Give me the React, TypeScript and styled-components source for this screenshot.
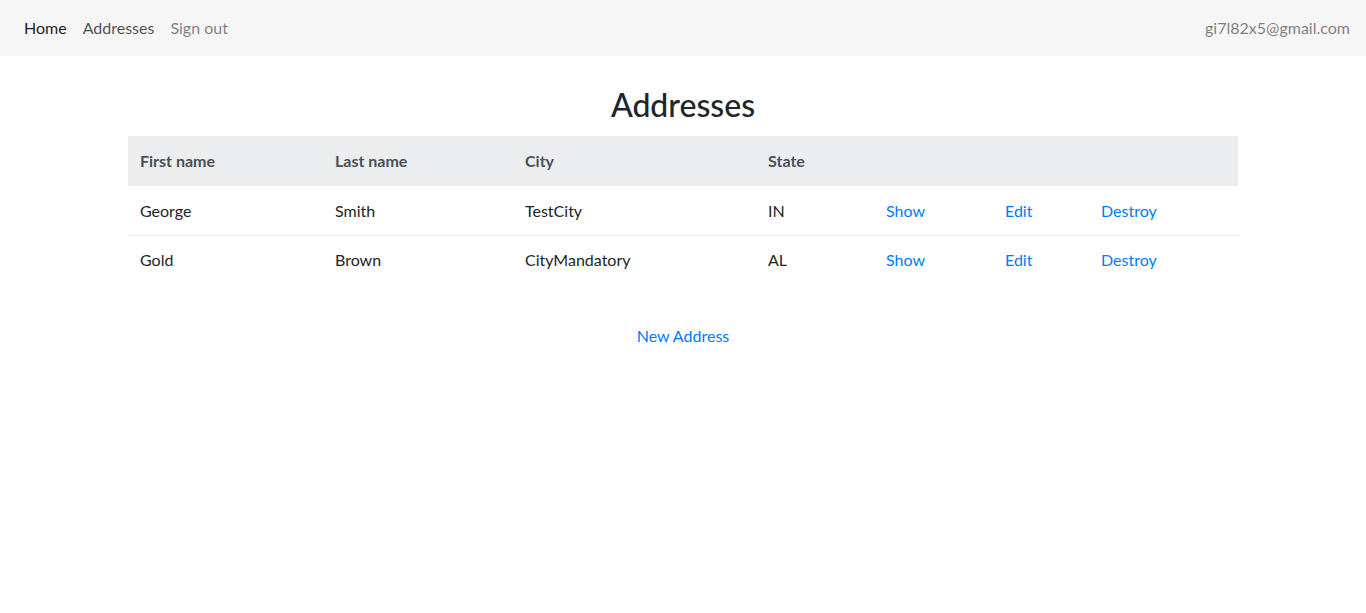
import React from "react";
import styled, { createGlobalStyle } from "styled-components";

const GlobalStyle = createGlobalStyle`
  body {
    margin: 0;
    font-family: Lato, "Liberation Sans", sans-serif;
    font-size: 16px;
    line-height: 1.5;
    color: #212529;
    background: #fff;
  }
  * {
    box-sizing: border-box;
  }
`;

const Navbar = styled.nav`
  display: flex;
  align-items: center;
  justify-content: space-between;
  height: 56px;
  padding: 8px 16px;
  background: #f6f6f6;
`;

const NavList = styled.div`
  display: flex;
`;

const NavLink = styled.a<{ $tone: number }>`
  padding: 8px;
  color: rgba(0, 0, 0, ${(p) => p.$tone});
  text-decoration: none;
`;

const NavText = styled.span`
  color: rgba(0, 0, 0, 0.5);
`;

const Container = styled.main`
  width: 1110px;
  margin: 0 auto;
  padding-top: 30px;
`;

const Title = styled.h2`
  margin: 0 0 12px;
  font-size: 32px;
  font-weight: 500;
  line-height: 1.2;
  text-align: center;
`;

const Table = styled.table`
  width: 100%;
  border-collapse: collapse;
  table-layout: fixed;
`;

const Th = styled.th`
  padding: 12px;
  height: 50px;
  text-align: left;
  font-weight: 700;
  color: #495057;
  background: #ecedef;
`;

const Td = styled.td<{ $first?: boolean }>`
  padding: 12px;
  height: 49px;
  border-top: ${(p) => (p.$first ? "none" : "1px solid #e9ecef")};
`;

const Link = styled.a`
  color: #007bff;
  text-decoration: none;
`;

const Footer = styled.div`
  padding-top: 40px;
  text-align: center;
`;

const widths = [195, 190, 243, 118, 119, 96, 149];

const rows = [
  { first: "George", last: "Smith", city: "TestCity", state: "IN" },
  { first: "Gold", last: "Brown", city: "CityMandatory", state: "AL" },
];

export default function App() {
  return (
    <>
      <GlobalStyle />
      <Navbar>
        <NavList>
          <NavLink href="#" $tone={0.9}>Home</NavLink>
          <NavLink href="#" $tone={0.7}>Addresses</NavLink>
          <NavLink href="#" $tone={0.5}>Sign out</NavLink>
        </NavList>
        <NavText>gi7l82x5@gmail.com</NavText>
      </Navbar>
      <Container>
        <Title>Addresses</Title>
        <Table>
          <colgroup>
            {widths.map((w, i) => (
              <col key={i} style={{ width: w }} />
            ))}
          </colgroup>
          <thead>
            <tr>
              <Th>First name</Th>
              <Th>Last name</Th>
              <Th>City</Th>
              <Th>State</Th>
              <Th />
              <Th />
              <Th />
            </tr>
          </thead>
          <tbody>
            {rows.map((r, i) => (
              <tr key={i}>
                <Td $first={i === 0}>{r.first}</Td>
                <Td $first={i === 0}>{r.last}</Td>
                <Td $first={i === 0}>{r.city}</Td>
                <Td $first={i === 0}>{r.state}</Td>
                <Td $first={i === 0}><Link href="#">Show</Link></Td>
                <Td $first={i === 0}><Link href="#">Edit</Link></Td>
                <Td $first={i === 0}><Link href="#">Destroy</Link></Td>
              </tr>
            ))}
          </tbody>
        </Table>
        <Footer>
          <Link href="#">New Address</Link>
        </Footer>
      </Container>
    </>
  );
}
